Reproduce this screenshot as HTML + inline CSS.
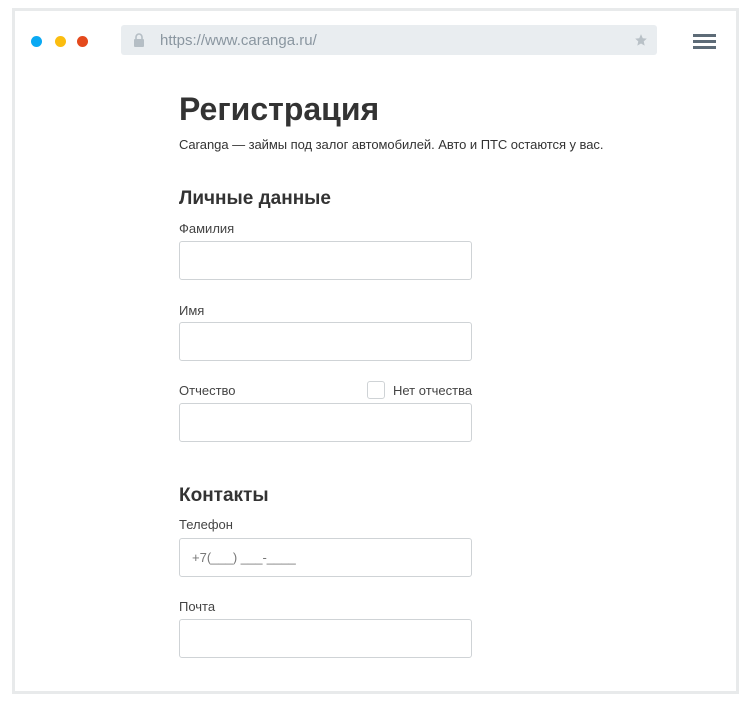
<!DOCTYPE html>
<html><head><meta charset="utf-8"><style>
*{box-sizing:border-box;margin:0;padding:0}
body{width:751px;height:709px;background:#fff;font-family:"Liberation Sans",sans-serif;position:relative;overflow:hidden}
.frame{position:absolute;left:12px;top:8px;width:727px;height:686px;border:3px solid #e8eaeb;background:#fff}
.dot{position:absolute;top:36px;width:11px;height:11px;border-radius:50%}
.addr{position:absolute;left:121px;top:25px;width:536px;height:30px;background:#e9edf0;border-radius:3px}
.addr span{position:absolute;left:39px;top:7px;font-size:15px;color:#8a96a0}
.ham{position:absolute;left:693px;width:23px;height:3px;background:#5d6b77}
.t{position:absolute;left:179px;color:#333}
.lbl{font-size:13px;color:#444}
.in{position:absolute;left:179px;width:293px;height:39px;border:1px solid #cfd3d6;border-radius:3px;background:#fff}
h2{font-size:19px;font-weight:bold;color:#2b2b2b}
</style></head><body>
<div class="frame"></div>
<div class="dot" style="left:31px;background:#0aa9f3"></div>
<div class="dot" style="left:55px;background:#fbbd0f"></div>
<div class="dot" style="left:77px;background:#e4491c"></div>
<div class="addr">
<svg style="position:absolute;left:12px;top:8px" width="12" height="14" viewBox="0 0 12 14"><path d="M3 6V4a3 3 0 0 1 6 0v2" fill="none" stroke="#b5bec5" stroke-width="1.6"/><rect x="1" y="6" width="10" height="8" rx="1" fill="#b5bec5"/></svg>
<span>https://www.caranga.ru/</span>
<svg style="position:absolute;left:513px;top:8px" width="14" height="14" viewBox="0 0 24 24"><path d="M12 2l3 7 7 .6-5.3 4.7 1.6 7.4L12 18l-6.3 3.7 1.6-7.4L2 9.6 9 9z" fill="#b9c1c7"/></svg>
</div>
<div class="ham" style="top:34px"></div><div class="ham" style="top:40px"></div><div class="ham" style="top:46px"></div>
<div class="t" style="top:91px;font-size:32px;font-weight:bold;color:#333">Регистрация</div>
<div class="t" style="top:137px;font-size:13px;color:#333;letter-spacing:-0.05px">Caranga — займы под залог автомобилей. Авто и ПТС остаются у вас.</div>
<h2 class="t" style="top:188px">Личные данные</h2>
<div class="t lbl" style="top:221px">Фамилия</div>
<div class="in" style="top:241px"></div>
<div class="t lbl" style="top:303px">Имя</div>
<div class="in" style="top:322px"></div>
<div class="t lbl" style="top:383px">Отчество</div>
<div style="position:absolute;left:367px;top:381px;width:18px;height:18px;border:1px solid #cfd3d6;border-radius:3px"></div>
<div class="lbl" style="position:absolute;left:393px;top:383px">Нет отчества</div>
<div class="in" style="top:403px"></div>
<h2 class="t" style="top:485px">Контакты</h2>
<div class="t lbl" style="top:517px">Телефон</div>
<div class="in" style="top:538px"><span style="position:absolute;left:12px;top:11px;font-size:13px;color:#777">+7(___) ___-____</span></div>
<div class="t lbl" style="top:599px">Почта</div>
<div class="in" style="top:619px"></div>
</body></html>
